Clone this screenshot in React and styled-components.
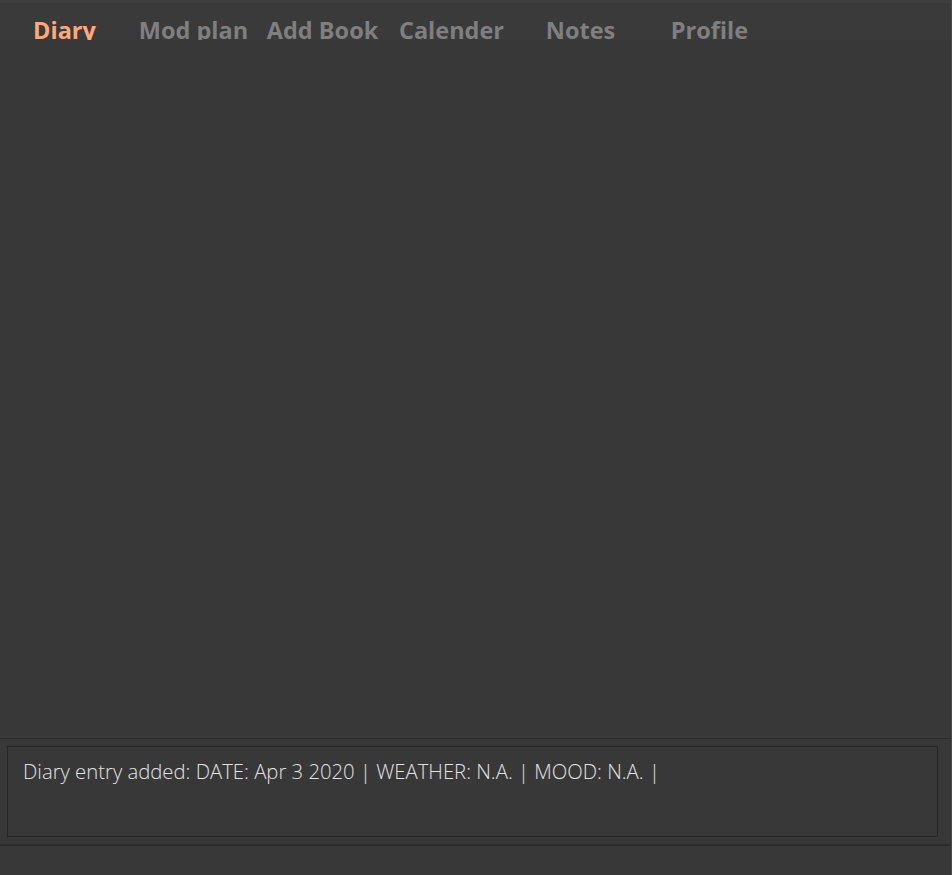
import * as React from "react";
import styled, { createGlobalStyle } from "styled-components";

const tabs = ["Diary", "Mod plan", "Add Book", "Calender", "Notes", "Profile"];

const App = () => {
  const [active, setActive] = React.useState(0);
  return (
    <>
      <GlobalStyle />
      <Window>
        <TabBar>
          {tabs.map((t, i) => (
            <Tab key={t} $active={i === active} onClick={() => setActive(i)}>
              {t}
            </Tab>
          ))}
        </TabBar>
        <Content />
        <ResultPane>
          <ResultBox>
            Diary entry added: DATE: Apr 3 2020 | WEATHER: N.A. | MOOD: N.A. |
          </ResultBox>
        </ResultPane>
        <StatusBar />
      </Window>
    </>
  );
};

const GlobalStyle = createGlobalStyle`
  html, body {
    margin: 0;
    padding: 0;
    background: #383838;
  }
`;

const Window = styled.div`
  display: flex;
  flex-direction: column;
  height: 875px;
  background: #383838;
  border-right: 1px solid #4a4a4a;
  box-sizing: border-box;
  font-family: "Open Sans", "Noto Sans", sans-serif;
`;

const TabBar = styled.div`
  display: flex;
  height: 37px;
  border-top: 3px solid #3f3f3f;
  background: #3a3a3a;
  overflow: hidden;
`;

const Tab = styled.div`
  width: 129px;
  flex: none;
  text-align: center;
  font-size: 23.5px;
  font-weight: 700;
  line-height: 24px;
  padding-top: 15px;
  color: ${(p) => (p.$active ? "#ffa87c" : "#7f7f7f")};
  cursor: pointer;
  white-space: nowrap;
`;

const Content = styled.div`
  flex: 1;
`;

const ResultPane = styled.div`
  height: 108px;
  border-top: 1px solid #2c2c2c;
  border-bottom: 2px solid #2c2c2c;
  padding: 7px 13px 7px 7px;
  box-sizing: border-box;
`;

const ResultBox = styled.div`
  height: 100%;
  box-sizing: border-box;
  border: 1px solid #262626;
  padding: 10px 15px;
  color: #e2e2e2;
  font-size: 20.3px;
  font-weight: 300;
`;

const StatusBar = styled.div`
  height: 29px;
  background: #383838;
`;

export default App;
